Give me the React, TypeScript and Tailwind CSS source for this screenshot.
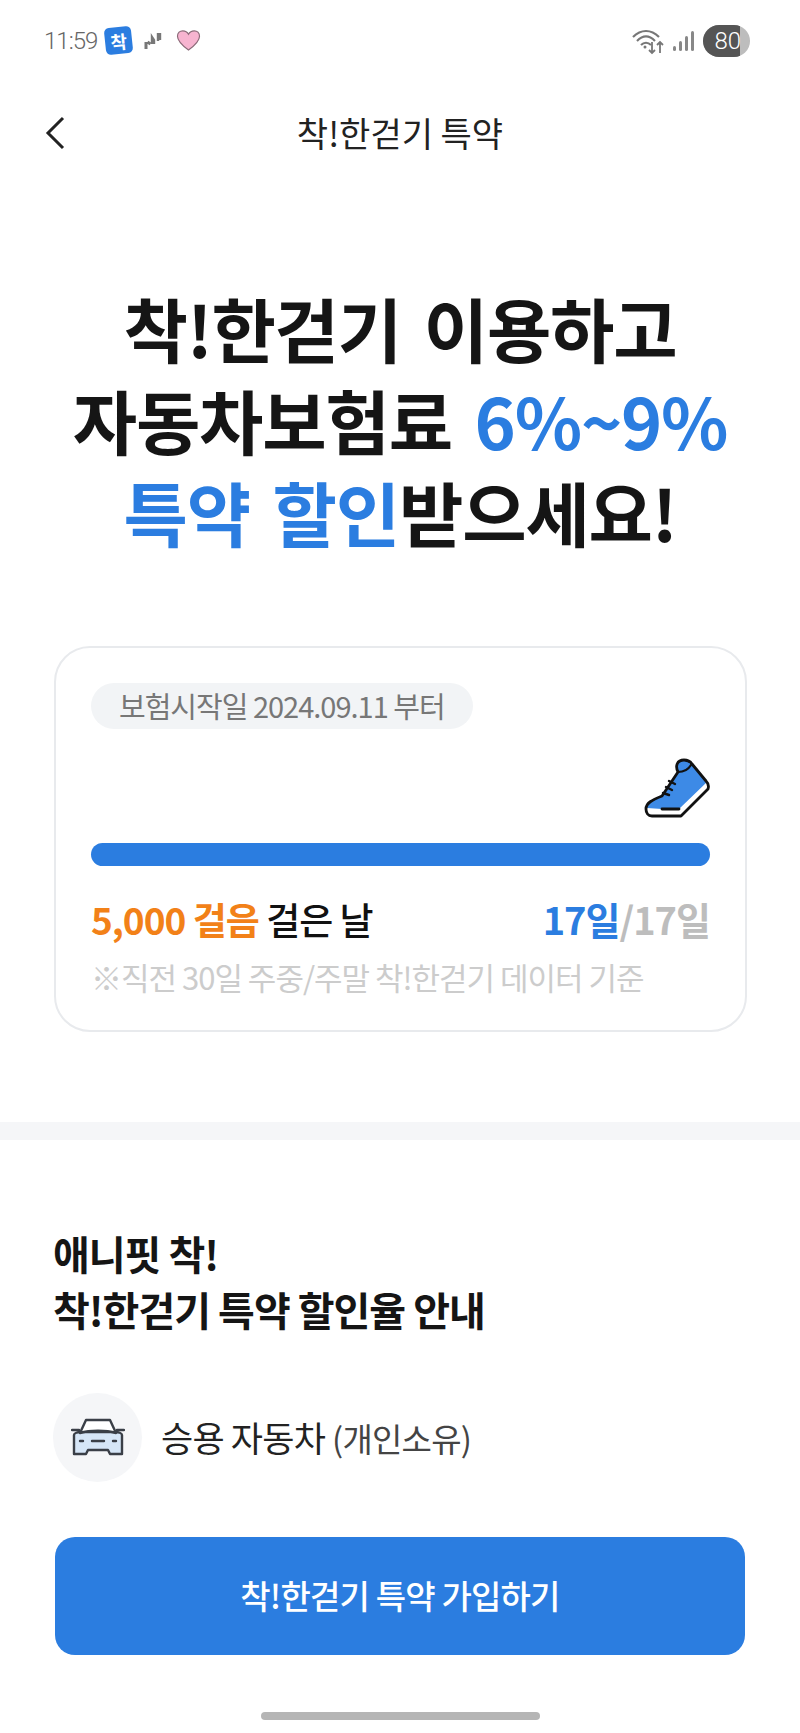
import React from 'react';

const font = { fontFamily: '"Noto Sans CJK KR", "Noto Sans", sans-serif' };

const StatusBar: React.FC = () => (
  <div className="h-[80px] flex items-center justify-between pl-[44px] pr-[50px] pt-[1px]">
    <div className="flex items-center">
      <span className="w-[49px] text-[24px] tracking-[-1px] text-[#666] font-['Roboto'] font-light">11:59</span>
      <div className="ml-[12px] w-[27px] h-[27px] bg-[#2b7de0] rounded-[5px] -rotate-6 flex items-center justify-center text-white text-[18px] font-bold leading-none">
        착
      </div>
      <svg className="ml-[12px]" width="18" height="20" viewBox="0 0 18 20" fill="none" stroke="#777">
        <path d="M2 18v-7M3.500 11l3 2" strokeWidth="3" />
        <path d="M8 13V6l2 3 0 4" strokeWidth="2.400" />
        <path d="M14 10V2M16 2v7" strokeWidth="2.400" />
      </svg>
      <svg className="ml-[14px]" width="25" height="23" viewBox="0 0 26 24">
        <path
          d="M13 22C5 16 1.500 12 1.500 7.500 1.500 4 4 2 7 2c2.500 0 4.800 1.300 6 3.500C14.200 3.300 16.500 2 19 2c3 0 5.500 2 5.500 5.500C24.500 12 21 16 13 22z"
          fill="#f7b4d0"
          stroke="#8a6a78"
          strokeWidth="1.200"
        />
      </svg>
    </div>
    <div className="flex items-center">
      <svg width="34" height="28" viewBox="0 0 34 28" fill="none" stroke="#777">
        <path d="M2 10C10 2 20 2 28 10" strokeWidth="2.200" />
        <path d="M6 14C12 8 18 8 24 14" strokeWidth="2.200" />
        <path d="M10 18C13 15 17 15 20 18" strokeWidth="2.200" />
        <circle cx="14" cy="20" r="1.500" fill="#777" strokeWidth="0" />
        <path d="M21 15v11M18 23l3 3 3-3M29 26V15M26 18l3-3 3 3" strokeWidth="1.800" />
      </svg>
      <svg className="ml-[7px]" width="22" height="24" viewBox="0 0 22 24" fill="#888">
        <rect x="1" y="17" width="3" height="5" rx="1.500" />
        <rect x="7" y="12" width="3" height="10" rx="1.500" />
        <rect x="13" y="7" width="3" height="15" rx="1.500" />
        <rect x="19" y="2" width="3" height="20" rx="1.500" />
      </svg>
      <div className="ml-[9px] w-[47px] h-[32px] rounded-full overflow-hidden bg-[#bdbdbd] relative">
        <div className="w-[37px] h-full bg-[#555] flex items-center justify-end">
          <span className="text-[24px] text-white font-['Roboto'] font-light leading-none mr-[-1px]">80</span>
        </div>
      </div>
    </div>
  </div>
);

const Shoe: React.FC = () => (
  <svg width="66" height="60" viewBox="0 0 66 60" fill="none" strokeLinejoin="round" strokeLinecap="round">
    <path d="M3 50 C2 46 6 44 18 38 L34 14 C31 8 33 2 40 2 C44 2 46 3 48 6 L63 24 L35 51 L18 51 Z" fill="#3d8ae6" />
    <path
      d="M8 58 L37 58 L64 31 C65 28 64 25 62 23 L48 6 C46 3 44 2 40 2 C33 2 31 8 34 14 L18 38 C8 42 2 45 2 51 C2 55 4 58 8 58 Z"
      stroke="#111"
      strokeWidth="2.800"
    />
    <path d="M34 14 C39 14 44 12 47 7" stroke="#111" strokeWidth="2.200" />
    <path d="M18 51 L35 51" stroke="#111" strokeWidth="2.800" />
    <path d="M25 23l6 3M22 29l6 3M19 35l6 2" stroke="#111" strokeWidth="2.400" />
  </svg>
);

const Car: React.FC = () => (
  <svg width="54" height="42" viewBox="0 0 54 42" fill="none" stroke="#3a3f47" strokeLinejoin="round" strokeLinecap="round">
    <path d="M3 18 C3 16 7 15 9 15 L45 15 C47 15 51 16 51 18 L51 37 L39 37 L37 33 L17 33 L15 37 L3 37 Z" fill="#d6e6f7" strokeWidth="2.400" />
    <path d="M9 16 L15 3 L39 3 L45 16 C35 13 19 13 9 16 Z" fill="#fff" strokeWidth="2.400" />
    <path d="M1 13 L8 13 M46 13 L53 13" strokeWidth="2.400" />
    <path d="M9 24h3M21 24h12M42 24h3" strokeWidth="2.400" />
  </svg>
);

export default function App() {
  return (
    <div className="w-[800px] h-[1733px] bg-white overflow-hidden flex flex-col relative text-[#111]" style={font}>
      <StatusBar />

      <div className="h-[104px] flex items-center relative justify-center">
        <svg className="absolute left-[44px] top-[35px]" width="22" height="36" viewBox="0 0 22 36" fill="none">
          <path d="M19 3L4 18l15 15" stroke="#222" strokeWidth="3" />
        </svg>
        <h1 className="text-[34px] font-normal text-[#222] tracking-[0px]">착!한걷기 특약</h1>
      </div>

      <div className="mt-[98px] text-center text-[70px] leading-[92px] font-bold tracking-[-1.2px] [word-spacing:8px] text-[#151515]">
        <div>착!한걷기 이용하고</div>
        <div>
          자동차보험료 <span className="text-[#2b7de0]">6%~9%</span>
        </div>
        <div>
          <span className="text-[#2b7de0]">특약 할인</span>받으세요!
        </div>
      </div>

      <div className="mt-[88px] ml-[54px] mr-[53px] h-[386px] border-2 border-[#e8eaed] rounded-[36px] px-[35px] pt-[35px]">
        <div className="inline-flex items-center h-[46px] rounded-full bg-[#f2f4f6] px-[28px] text-[29px] tracking-[-1px] text-[#777]">
          보험시작일 2024.09.11 부터
        </div>
        <div className="flex justify-end mt-[29px]">
          <Shoe />
        </div>
        <div className="h-[23px] rounded-full bg-[#2b7de0] mt-[25px]" />
        <div className="flex justify-between items-center mt-[28px] text-[37px] leading-[50px] tracking-[-1px] font-medium">
          <div>
            <span className="text-[#f28118] font-bold">5,000 걸음</span> 걸은 날
          </div>
          <div className="text-[#bdbdbd] font-bold text-[38px]">
            <span className="text-[#2b7de0]">17일</span>/17일
          </div>
        </div>
        <div className="mt-[13px] text-[31px] leading-[40px] tracking-[-1px] text-[#cccccc]">
          ※직전 30일 주중/주말 착!한걷기 데이터 기준
        </div>
      </div>

      <div className="mt-[90px] h-[18px] bg-[#f5f6f8]" />

      <div className="mt-[85px] ml-[53px] text-[40px] leading-[56px] font-bold tracking-[-1px] text-[#151515]">
        <div>애니핏 착!</div>
        <div>착!한걷기 특약 할인율 안내</div>
      </div>

      <div className="mt-[56px] ml-[53px] flex items-center">
        <div className="w-[89px] h-[89px] rounded-full bg-[#f5f6f8] flex items-center justify-center">
          <Car />
        </div>
        <div className="ml-[19px] text-[35px] tracking-[-0.8px] text-[#222]">
          <span>승용 자동차</span> <span className="text-[33px] text-[#444]">(개인소유)</span>
        </div>
      </div>

      <div className="mt-[55px] mx-[55px] h-[118px] rounded-[20px] bg-[#2b7de0] flex items-center justify-center text-white text-[33px] font-medium tracking-[-0.8px]">
        착!한걷기 특약 가입하기
      </div>

      <div className="absolute left-[261px] top-[1712px] w-[279px] h-[8px] rounded-full bg-[#b5b5b5]" />
    </div>
  );
}
